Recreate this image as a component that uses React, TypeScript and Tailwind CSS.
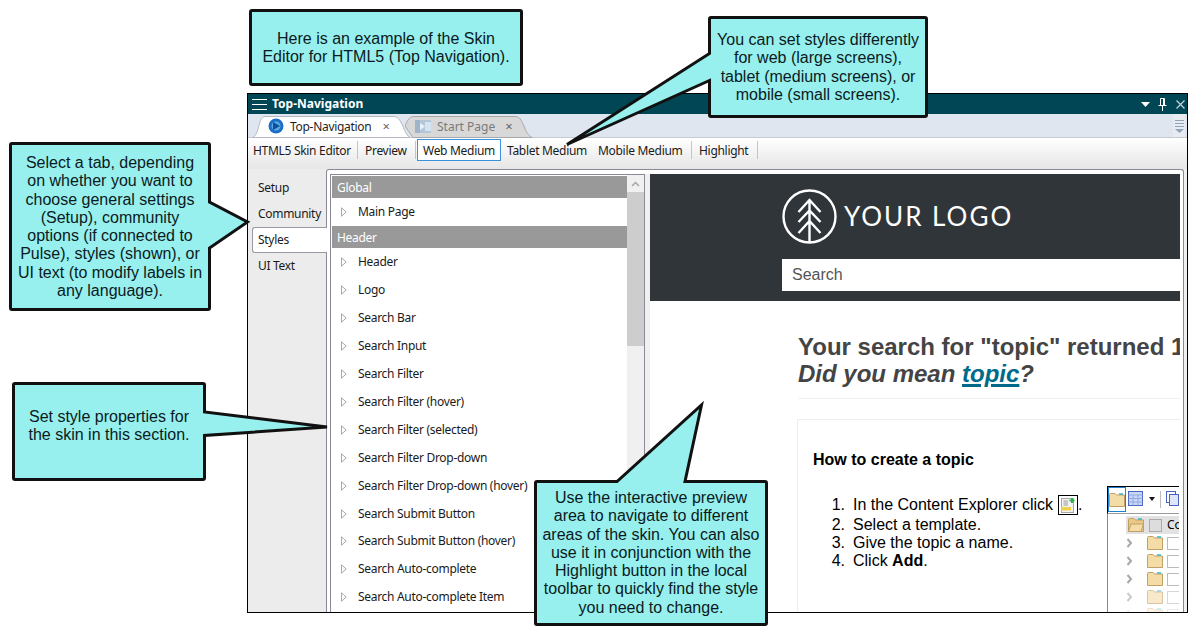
import React from "react";

const ui = "font-['Noto_Sans',sans-serif]";
const arial = "font-['Liberation_Sans',Arial,sans-serif]";

const calloutPaths = [
  "M250.5 12 Q250.5 10.5 252 10.5 L520 10.5 Q521.5 10.5 521.5 12 L521.5 83 Q521.5 84.5 520 84.5 L252 84.5 Q250.5 84.5 250.5 83 Z",
  "M709.5 19 Q709.5 17.5 711 17.5 L925 17.5 Q926.5 17.5 926.5 19 L926.5 115 Q926.5 116.5 925 116.5 L711 116.5 Q709.5 116.5 709.5 115 L709.5 80.5 L567 144.5 L709.5 53.5 Z",
  "M10.5 145 Q10.5 143.5 12 143.5 L208 143.5 Q209.5 143.5 209.5 145 L209.5 202 L247.5 222 L209.5 248 L209.5 308 Q209.5 309.5 208 309.5 L12 309.5 Q10.5 309.5 10.5 308 Z",
  "M13.5 385 Q13.5 383.5 15 383.5 L203 383.5 Q204.5 383.5 204.5 385 L204.5 412 L327 427 L204.5 435.5 L204.5 478 Q204.5 479.5 203 479.5 L15 479.5 Q13.5 479.5 13.5 478 Z",
  "M535.5 483 Q535.5 481.5 537 481.5 L617 481.5 L701.5 405 L685 481.5 L765 481.5 Q766.5 481.5 766.5 483 L766.5 623 Q766.5 624.5 765 624.5 L537 624.5 Q535.5 624.5 535.5 623 Z",
];

function CalloutText({ className, lines }: { className: string; lines: string[] }) {
  return (
    <div className={`absolute z-30 flex flex-col items-center text-center text-[16px] tracking-normal leading-[18.3px] text-[#0b1a22] whitespace-nowrap ${arial} ${className}`}>
      {lines.map((l) => (
        <span key={l}>{l}</span>
      ))}
    </div>
  );
}

function Sep() {
  return <div className="w-px h-[18px] bg-[#c4c4c4] shrink-0" />;
}

function Chevron() {
  return (
    <svg width="6" height="10" viewBox="0 0 6 10" className="shrink-0">
      <path d="M0.5 0.8 L5.2 5 L0.5 9.2 Z" fill="#fff" stroke="#a8a8a8" />
    </svg>
  );
}

function Row({ label, h = "h-[28px]" }: { label: string; h?: string }) {
  return (
    <div className={`${h} flex items-center pl-[9px]`}>
      <Chevron />
      <span className="ml-[11px] text-[#1a1a1a]">{label}</span>
    </div>
  );
}

function Group({ label }: { label: string }) {
  return <div className="h-[22px] bg-[#999999] text-white pl-[5px] pt-px flex items-center">{label}</div>;
}

function Folder({ open = false }: { open?: boolean }) {
  return (
    <svg width="16" height="14" viewBox="0 0 16 14" className="shrink-0">
      <path d="M0.5 3 L0.5 1.5 Q0.5 0.5 1.5 0.5 L6 0.5 L7.5 2 L15.5 2 L15.5 13.5 L0.5 13.5 Z" fill={open ? "#e8c98a" : "#f3dca6"} stroke="#c29f62" />
      <path d="M10 1 L14 1" stroke="#38b6c8" strokeWidth="1.5" />
      {open && <path d="M0.5 13.5 L3 6 L15.5 6 L13 13.5 Z" fill="#f3dca6" stroke="#c29f62" />}
    </svg>
  );
}

function TreeRow({ fade = "" }: { fade?: string }) {
  return (
    <div className={`h-[18px] flex items-center pl-[18px] ${fade}`}>
      <svg width="7" height="10" viewBox="0 0 7 10" className="shrink-0">
        <path d="M1.5 1 L5 5 L1.5 9" fill="none" stroke="#a8a8a8" strokeWidth="2" />
      </svg>
      <div className="ml-[14px]">
        <Folder />
      </div>
      <div className="ml-[4px] w-[13px] h-[13px] border border-[#bbbbbb] bg-white shrink-0" />
    </div>
  );
}

const items = [
  "Search Bar",
  "Search Input",
  "Search Filter",
  "Search Filter (hover)",
  "Search Filter (selected)",
  "Search Filter Drop-down",
  "Search Filter Drop-down (hover)",
];
const items2 = ["Search Submit Button (hover)", "Search Auto-complete", "Search Auto-complete Item"];

export default function App() {
  return (
    <div className={`relative w-[1188px] h-[635px] bg-white overflow-hidden pt-[93px] pl-[247px] ${ui} text-[12px] tracking-[-0.3px]`}>
      {/* Window */}
      <div className="w-[941px] h-[520px] border border-black flex flex-col bg-[#f0f0f0]">
        {/* Title bar */}
        <div className="h-[20px] shrink-0 bg-[#004655] flex items-center text-white pl-[4px]">
          <svg width="15" height="13" viewBox="0 0 15 13" className="shrink-0">
            <path d="M0 1.5 H15 M0 6.5 H15 M0 11.5 H15" stroke="#fff" strokeWidth="1" />
          </svg>
          <span className="ml-[5px] font-bold leading-none tracking-normal">Top-Navigation</span>
          <div className="ml-auto flex items-center pr-[2px] gap-[8px]">
            <svg width="9" height="5" viewBox="0 0 9 5">
              <path d="M0 0 H9 L4.5 5 Z" fill="#fff" />
            </svg>
            <svg width="9" height="13" viewBox="0 0 9 13">
              <path d="M2.5 0.5 H6.5 V7.5 H2.5 Z M0.5 7.5 H8.5 M4.5 8 V13 M5.5 1 V7" fill="none" stroke="#fff" />
            </svg>
            <svg width="9" height="9" viewBox="0 0 9 9" className="ml-[1px]">
              <path d="M0.5 0.5 L8.5 8.5 M8.5 0.5 L0.5 8.5" stroke="#c4d2d6" strokeWidth="1.2" />
            </svg>
          </div>
        </div>

        {/* Tab strip */}
        <div className="h-[24px] shrink-0 bg-[#dfe6f0] border-b border-[#c5c9d0] flex pl-[4px]">
          <div className="relative z-10 w-[158px] h-[23px] flex items-center">
            <svg width="158" height="24" viewBox="0 0 158 24" className="absolute left-0 top-0">
              <path d="M0.5 23.5 C5 22 6 14 8 8 C9.5 3.5 11 2.5 14 2.5 L141 2.5 C146 2.5 147 5 150 10 C152 15 154 21 158 23.5 Z" fill="#ffffff" stroke="#b4b8c0" />
            </svg>
            <svg width="16" height="16" viewBox="0 0 16 16" className="relative ml-[16px] mt-[1px]">
              <circle cx="8" cy="8" r="7.5" fill="#1c6fc6" />
              <circle cx="8" cy="8" r="4.5" fill="#5aa8e8" />
              <path d="M5 4 L12 8 L5 12 Z" fill="#0e4f97" />
            </svg>
            <span className="relative ml-[6px] pt-[2px] text-[#1f1f1f]">Top-Navigation</span>
            <span className="relative ml-[11px] pt-[2px] text-[#666666] text-[13px] leading-none">×</span>
          </div>
          <div className="relative -ml-[5px] w-[127px] h-[23px] flex items-center">
            <svg width="127" height="24" viewBox="0 0 127 24" className="absolute left-0 top-0">
              <path d="M0 12 C3 5 5 2.5 9 2.5 L110 2.5 C115 2.5 116 6 119 12 C121 18 124 22 127 23.5 L8 23.5 Z" fill="#d8d8d8" stroke="#a8a8a8" />
            </svg>
            <svg width="16" height="13" viewBox="0 0 16 13" className="relative ml-[10px] mt-[1px]">
              <rect width="16" height="13" fill="#b4c6d8" />
              <rect x="0" y="0" width="5" height="13" fill="#9fb4c8" />
              <rect x="10" y="2" width="6" height="9" fill="#d5e4f2" />
              <path d="M5 3 L10 6.5 L5 10 Z" fill="#e8f2fb" />
            </svg>
            <span className="relative ml-[6px] pt-[2px] text-[#7a7a7a] tracking-normal">Start Page</span>
            <span className="relative ml-[10px] pt-[2px] text-[#666666] text-[13px] leading-none">×</span>
          </div>
          <div className="ml-auto mr-[2px] w-[12px] h-[23px] bg-[#e8ecf2] flex items-center justify-center">
            <svg width="9" height="14" viewBox="0 0 9 14">
              <path d="M0 1.5 H9 M0 4.5 H9 M0 7.5 H9" stroke="#8fa4bc" />
              <path d="M0 10 H9 L4.5 14 Z" fill="#8fa4bc" />
            </svg>
          </div>
        </div>

        {/* Toolbar */}
        <div className="h-[31px] shrink-0 bg-gradient-to-b from-white to-[#e6e6e6] flex items-start pt-[1px] pl-[5px] text-[#1a1a1a]">
          <div className="w-[104px] h-[22px] pt-[2px] flex items-center">HTML5 Skin Editor</div>
          <div className="h-[22px] flex items-center"><Sep /></div>
          <div className="w-[57px] h-[22px] pt-[2px] flex items-center pl-[7px]">Preview</div>
          <div className="h-[22px] flex items-center"><Sep /></div>
          <div className="ml-px w-[84px] h-[22px] pt-[2px] border border-[#3a92dc] bg-white flex items-center justify-center">Web Medium</div>
          <div className="w-[91px] h-[22px] pt-[2px] flex items-center pl-[6px]">Tablet Medium</div>
          <div className="w-[99px] h-[22px] pt-[2px] flex items-center pl-[6px]">Mobile Medium</div>
          <div className="h-[22px] flex items-center"><Sep /></div>
          <div className="w-[65px] h-[22px] pt-[2px] flex items-center pl-[7px]">Highlight</div>
          <div className="h-[22px] flex items-center"><Sep /></div>
        </div>

        {/* Body */}
        <div className="flex-1 min-h-0 flex pr-[3px]">
          {/* Rail */}
          <div className="w-[78px] shrink-0 bg-[#ececec] pt-[6px] pl-[4px] text-[#1a1a1a]">
            <div className="h-[26px] pl-[6px] flex items-center">Setup</div>
            <div className="h-[26px] pl-[6px] flex items-center">Community</div>
            <div className="relative z-10 h-[26px] w-[75px] bg-white border border-r-0 border-[#9a9aa4] rounded-l-[3px] pl-[5px] flex items-center">Styles</div>
            <div className="h-[26px] pl-[6px] flex items-center">UI Text</div>
          </div>

          {/* Panel */}
          <div className="flex-1 min-w-0 bg-white border-l border-t border-r border-[#8a8a96] rounded-t-[3px] pt-[4px] pl-[3px] flex overflow-hidden">
            {/* Style list */}
            <div className="w-[315px] shrink-0 border-l border-t border-r border-[#8a8a96] flex overflow-hidden">
              <div className="w-[296px] shrink-0 pt-px pl-px overflow-hidden">
                <Group label="Global" />
                <Row label="Main Page" />
                <Group label="Header" />
                <Row label="Header" />
                <Row label="Logo" />
                {items.map((i) => (
                  <Row key={i} label={i} />
                ))}
                <Row label="Search Submit Button" h="h-[27px]" />
                {items2.map((i) => (
                  <Row key={i} label={i} />
                ))}
              </div>
              <div className="w-[17px] shrink-0 bg-[#f0f0f0] flex flex-col">
                <div className="h-[17px] flex items-center justify-center">
                  <svg width="9" height="6" viewBox="0 0 9 6">
                    <path d="M1 5 L4.5 1.5 L8 5" fill="none" stroke="#a6a6a6" strokeWidth="1.5" />
                  </svg>
                </div>
                <div className="h-[154px] bg-[#cdcdcd]" />
              </div>
            </div>
            <div className="w-[5px] shrink-0 bg-[#f0f0f0]" />

            {/* Preview */}
            <div className={`w-[530px] shrink-0 flex flex-col overflow-hidden tracking-normal ${arial}`}>
              <div className="h-[127px] shrink-0 bg-[#30353a] pl-[132px] flex flex-col">
                <div className="h-[85px] shrink-0 flex items-center">
                  <svg width="55" height="55" viewBox="0 0 55 55" className="shrink-0">
                    <circle cx="27.5" cy="27.5" r="26" fill="none" stroke="#fff" strokeWidth="2.4" />
                    <path d="M27.5 11 V53 M16.5 23 L27.5 11 L38.5 23 M16.5 33 L27.5 21.5 L38.5 33 M16.5 44 L27.5 32 L38.5 44" fill="none" stroke="#fff" strokeWidth="2.4" />
                  </svg>
                  <span className="ml-[7px] text-[26px] tracking-[2px] text-white font-['Lato',sans-serif]">YOUR LOGO</span>
                </div>
                <div className="h-[32px] shrink-0 bg-white pl-[10px] flex items-center text-[16px] text-[#555555]">Search</div>
              </div>

              <div className="flex-1 min-h-0 overflow-hidden pt-[32px]">
                <div className="pl-[148px] text-[24px] leading-[27px] font-bold text-[#444444] whitespace-nowrap">
                  <div>Your search for "topic" returned 1</div>
                  <div className="italic">
                    Did you mean <span className="text-[#006a8a] underline decoration-[3px]">topic</span>?
                  </div>
                </div>
                <div className="ml-[148px] mt-[11px] h-px bg-[#f0f0f0]" />
                <div className="ml-[147px] mt-[20px] h-[300px] border-l border-t border-[#eeeeee] pl-[15px] pt-[30px] text-black">
                  <div className="text-[16px] leading-[20px] font-bold">How to create a topic</div>
                  <div className="mt-[16px] flex text-[16px] leading-[18px]">
                    <div className="w-[294px] shrink-0 pt-[7px]">
                      <div className="flex items-center h-[23px]">
                        <span className="w-[32px] text-right">1.</span>
                        <span className="ml-[8px]">In the Content Explorer click</span>
                        <svg width="20" height="20" viewBox="0 0 20 20" className="ml-[5px] shrink-0">
                          <rect x="0.5" y="0.5" width="19" height="19" fill="#fff" stroke="#000" />
                          <rect x="3.5" y="3.5" width="12" height="14" fill="#f2f2f2" stroke="#a8a8a8" />
                          <path d="M5.5 6 H10 M5.5 8 H10 M5.5 10 H10" stroke="#9a9a9a" />
                          <rect x="3" y="12" width="10" height="3.5" fill="#f2d14a" />
                          <path d="M14 3 V8 M11.5 5.5 H16.5" stroke="#2fb34a" strokeWidth="2" />
                        </svg>
                        <span>.</span>
                      </div>
                      <div className="flex">
                        <span className="w-[32px] text-right">2.</span>
                        <span className="ml-[8px]">Select a template.</span>
                      </div>
                      <div className="flex">
                        <span className="w-[32px] text-right">3.</span>
                        <span className="ml-[8px]">Give the topic a name.</span>
                      </div>
                      <div className="flex">
                        <span className="w-[32px] text-right">4.</span>
                        <span className="ml-[8px]">
                          Click <b>Add</b>.
                        </span>
                      </div>
                    </div>
                    <div className="w-[72px] shrink-0 h-[140px] border-t border-black overflow-hidden">
                      <div className="h-[27px] border-l border-l-black border-b border-b-[#9a9a9a] flex items-start">
                        <div className="w-[24px] h-[25px] border border-[#1f7fd0] flex items-center justify-center">
                          <Folder />
                        </div>
                        <svg width="15" height="15" viewBox="0 0 15 15" className="ml-[2px] mt-[4px] shrink-0">
                          <rect x="0.5" y="0.5" width="14" height="14" fill="#c9d8f4" stroke="#4a62c4" />
                          <path d="M0.5 4 H14.5 M0.5 7.5 H14.5 M0.5 11 H14.5 M5 4 V14.5 M10 4 V14.5" stroke="#8fa8e4" />
                        </svg>
                        <svg width="6" height="4" viewBox="0 0 6 4" className="ml-[6px] mt-[10px] shrink-0">
                          <path d="M0 0 H6 L3 4 Z" fill="#111" />
                        </svg>
                        <div className="ml-[5px] mt-[4px] w-px h-[17px] bg-[#bbbbbb] shrink-0" />
                        <svg width="14" height="16" viewBox="0 0 14 16" className="ml-[5px] mt-[4px] shrink-0">
                          <rect x="0.5" y="0.5" width="9" height="11" fill="#fff" stroke="#4a62c4" />
                          <rect x="3.5" y="3.5" width="9" height="11" fill="#dde6fa" stroke="#4a62c4" />
                        </svg>
                      </div>
                      <div className="pt-[2px] border-l border-[#8a8a8a] h-[112px]">
                        <div className="ml-[18px] h-[18px] bg-[#e2e2e2] flex items-center pl-[2px]">
                          <Folder open />
                          <div className="ml-[5px] w-[13px] h-[13px] border border-[#aaaaaa] bg-[#dddddd] shrink-0" />
                          <span className={`ml-[5px] text-[12px] text-black ${ui}`}>Co</span>
                        </div>
                        <TreeRow />
                        <TreeRow />
                        <TreeRow />
                        <TreeRow fade="opacity-60" />
                        <TreeRow fade="opacity-30" />
                      </div>
                    </div>
                  </div>
                </div>
              </div>
            </div>
          </div>
        </div>
      </div>

      {/* Callouts over the window */}
      <svg width="1188" height="635" viewBox="0 0 1188 635" className="absolute left-0 top-0 z-20 pointer-events-none">
        {calloutPaths.map((d) => (
          <path key={d} d={d} fill="#97f0ed" stroke="#111111" strokeWidth="3" strokeLinejoin="miter" />
        ))}
      </svg>
      <CalloutText className="left-[249px] w-[274px] top-[30px]" lines={["Here is an example of the Skin", "Editor for HTML5 (Top Navigation)."]} />
      <CalloutText
        className="left-[708px] w-[220px] top-[31px]"
        lines={["You can set styles differently", "for web (large screens),", "tablet (medium screens), or", "mobile (small screens)."]}
      />
      <CalloutText
        className="left-[9px] w-[202px] top-[154px]"
        lines={[
          "Select a tab, depending",
          "on whether you want to",
          "choose general settings",
          "(Setup), community",
          "options (if connected to",
          "Pulse), styles (shown), or",
          "UI text (to modify labels in",
          "any language).",
        ]}
      />
      <CalloutText className="left-[12px] w-[194px] top-[408px]" lines={["Set style properties for", "the skin in this section."]} />
      <CalloutText
        className="left-[534px] w-[234px] top-[489px]"
        lines={[
          "Use the interactive preview",
          "area to navigate to different",
          "areas of the skin. You can also",
          "use it in conjunction with the",
          "Highlight button in the local",
          "toolbar to quickly find the style",
          "you need to change.",
        ]}
      />
    </div>
  );
}
